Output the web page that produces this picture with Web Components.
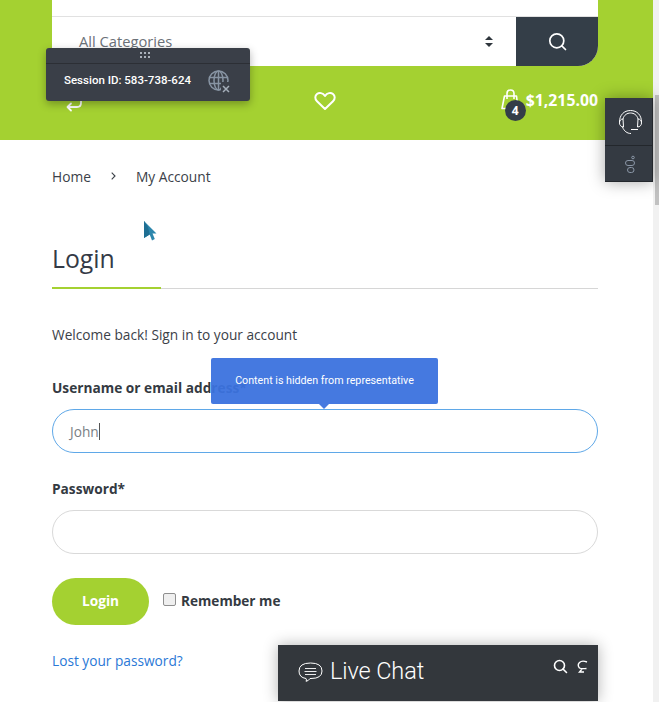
<!DOCTYPE html>
<html lang="en"><head><meta charset="utf-8"><title>My Account</title>
<style>
html,body{margin:0;height:702px;overflow:hidden;background:#fff}
body{font-family:"Open Sans",sans-serif;color:#333a42}
x-page{height:702px}
</style></head><body>
<x-page>
  <x-header></x-header>
  <x-breadcrumb></x-breadcrumb>
  <x-login></x-login>
  <x-session slot="overlay"></x-session>
  <x-side slot="overlay"></x-side>
  <x-hidden-tip slot="overlay"></x-hidden-tip>
  <x-pointer slot="overlay"></x-pointer>
  <x-chat slot="overlay"></x-chat>
</x-page>
<script>
function def(name,html){
  customElements.define(name,class extends HTMLElement{
    constructor(){super();this.attachShadow({mode:'open'}).innerHTML=html;}
  });
}
def('x-page',`<style>
:host{display:flex;position:relative;width:659px;overflow:hidden}
.main{width:653px;flex:none}
.bar{flex:1;background:#f1f1f1;display:flex;flex-direction:column;align-items:flex-end}
.thumb{width:4px;height:110px;margin-top:95px;background:#c1c1c1}
</style><div class="main"><slot></slot></div><div class="bar"><div class="thumb"></div></div><slot name="overlay"></slot>`);

def('x-header',`<style>
:host{display:block;height:140px;background:#a4d131;padding:0 55px 0 52px;box-sizing:border-box}
.search{background:#fff;border-radius:0 0 20px 0;height:66px;display:flex;flex-direction:column}
.top{height:16px;border-bottom:1px solid #e1e1e1}
.row{flex:1;display:flex;align-items:stretch}
.cat{flex:1;display:flex;align-items:center;justify-content:space-between;padding:0 23px 1px 27px;font-size:14.700px;color:#6b7178}
.go{width:82px;flex:none;background:#343e48;border-radius:0 0 20px 0;display:flex;align-items:center;justify-content:center}
.icons{display:flex;align-items:center;height:74px;position:relative;justify-content:center}
.heart{margin-bottom:5px}
.swap{position:absolute;left:13px;top:22px}
.cart{position:absolute;right:0;top:22px;display:flex;align-items:center;color:#fff;font-weight:700;font-size:15.800px}
.bag{position:relative;width:25px;height:24px;margin-right:1px}
.n{position:absolute;left:5px;top:12px;width:21px;height:21px;border-radius:50%;background:#343e48;color:#fff;font-size:12px;line-height:21px;text-align:center}
.price{line-height:24px}
</style>
<div class="search"><div class="top"></div>
<div class="row"><div class="cat"><span>All Categories</span>
<svg width="8" height="11" viewBox="0 0 8 11" fill="#2f363d"><path d="M4 0 8 4H0zM0 7h8l-4 4z"/></svg></div>
<div class="go"><svg width="19" height="19" viewBox="0 0 19 19" fill="none" stroke="#fff" stroke-width="1.700"><circle cx="8.800" cy="8.800" r="7"/><path d="M13.800 13.800 17.500 17.500" stroke-linecap="round"/></svg></div></div></div>
<div class="icons">
<svg class="swap" width="19" height="24" viewBox="0 0 19 24" fill="none" stroke="#fff" stroke-width="1.800" stroke-linecap="round" stroke-linejoin="round"><path d="M16 11v4q0 4-4 4H3M6 15.500 2.500 19 6 22.500"/></svg>
<svg class="heart" width="22" height="20" viewBox="0 0 22 20" fill="none" stroke="#fff" stroke-width="2" stroke-linejoin="round"><path d="M11 18 3 10.300C.5 7.800 1 4.600 3 3c2.200-1.700 5.800-1.300 8 2 2.200-3.300 5.800-3.700 8-2 2 1.600 2.500 4.800 0 7.300z"/></svg>
<div class="cart"><div class="bag"><svg width="22" height="24" viewBox="0 0 22 24" fill="none" stroke="#fff" stroke-width="1.600" stroke-linejoin="round" style="position:absolute;left:0;top:0"><path d="M4.500 8 2 20.500h16L16.500 8z"/><path d="M7 11V5.500Q7 2 10.500 2T14 5.500V11"/></svg><div class="n">4</div></div><span class="price">$1,215.00</span></div>
</div>`);

def('x-breadcrumb',`<style>
:host{display:flex;align-items:center;height:20px;margin:26px 0 0 52px;font-size:13.750px;color:#3b4148}
svg{margin:0 20px 0 20px}
</style><span>Home</span><svg width="5" height="8" viewBox="0 0 5 8" fill="none" stroke="#3b4148" stroke-width="1.100"><path d="M.7.700 4 4 .7 7.300"/></svg><span>My Account</span>`);

def('x-login',`<style>
:host{display:block;padding:0 55px 0 52px}
h1{margin:48px 0 0;height:55px;box-sizing:border-box;font-size:24.800px;font-weight:400;line-height:33px;padding-top:8px;color:#343a46;position:relative;border-bottom:1px solid #d6d6d6}
h1::after{content:"";position:absolute;left:0;bottom:-1px;width:109px;height:2px;background:#a4d131}
p{margin:36px 0 0;font-size:13.700px;line-height:20px;color:#3b4148}
label{display:block;font-weight:700;font-size:13.700px;line-height:20px;color:#343a42}
.u{margin-top:33px}
.field{height:44px;box-sizing:border-box;border:1px solid #d9d9d9;border-radius:22px;margin-top:11px;padding-left:17px;display:flex;align-items:center;font-size:13.700px;color:#7a7f85}
.focus{border-color:#5fa8e8}
.caret{display:inline-block;width:1px;height:17px;background:#555}
.p{margin-top:26px}
.actions{display:flex;align-items:center;margin-top:24px}
button{width:97px;height:47px;border:0;border-radius:24px;background:#a4d131;color:#fff;font:700 13.700px "Open Sans",sans-serif;padding:0 0 2px}
.box{width:11px;height:11px;margin:0 5px 0 14px;border:1px solid #8f8f8f;border-radius:2px;background:#efefef;position:relative;top:-2px}
.rm{font-weight:700;font-size:13.600px;color:#343a42;position:relative;top:-1px}
a{display:block;margin-top:26px;font-size:13.700px;line-height:20px;color:#2a78d6;text-decoration:none}
</style>
<h1>Login</h1>
<p>Welcome back! Sign in to your account</p>
<label class="u">Username or email address*</label>
<div class="field focus">John<span class="caret"></span></div>
<label class="p">Password*</label>
<div class="field" style="margin-top:11px"></div>
<div class="actions"><button>Login</button><span class="box"></span><span class="rm">Remember me</span></div>
<a href="#">Lost your password?</a>`);

def('x-session',`<style>
:host{position:absolute;left:46px;top:48px;width:204px;height:53px;background:#3a3f48;border-radius:3px;box-shadow:0 3px 9px rgba(0,0,0,.3);color:#fff;font:500 11.500px Roboto,sans-serif;display:flex;flex-direction:column}
.grip{height:14.500px;border-bottom:1px solid #2c2f35;display:flex;align-items:center;justify-content:center;padding-right:6px}
.body{flex:1;display:flex;align-items:center;justify-content:space-between;padding:0 19px 5px 18px}
</style>
<div class="grip"><svg width="11" height="7" viewBox="0 0 11 7" fill="#aab1bb"><path d="M0 0h2v2H0zM4 0h2v2H4zM8 0h2v2H8zM0 4h2v2H0zM4 4h2v2H4zM8 4h2v2H8z"/></svg></div>
<div class="body"><span>Session ID: 583-738-624</span>
<svg width="23" height="23" viewBox="0 0 23 23" fill="none" stroke="#8794a3" stroke-width="1.500" style="margin-top:3px"><circle cx="10.500" cy="10.500" r="9.500"/><ellipse cx="10.500" cy="10.500" rx="4.500" ry="9.500"/><path d="M1 7.500h19M1 13.500h19M10.500 1v19"/><path d="M13 12h10v11H13z" fill="#3a3f48" stroke="none"/><path d="M15 16l6 6M21 16l-6 6" stroke="#a4aeb9"/></svg></div>`);

def('x-side',`<style>
:host{position:absolute;left:605px;top:98px;width:48px;height:84px;background:#343a42;box-shadow:0 0 16px rgba(0,0,0,.35);border-right:1px solid #23272c;border-bottom:1px solid #23272c;box-sizing:border-box;display:flex;flex-direction:column}
.a{height:48px;border-bottom:1px solid #23272c;box-sizing:border-box;display:flex;align-items:center;justify-content:center}
.a svg{margin-left:3px}
.b{flex:1;display:flex;align-items:center;justify-content:center}
</style>
<div class="a"><svg width="25" height="26" viewBox="0 0 25 26" fill="none" stroke="#fff" stroke-width="1"><path d="M1.500 13C1.500 6 6 1.500 12.500 1.500S23.500 6 23.500 13M5 10C6 6 9 4 12.500 4S19 6 20 10M5 10C2.500 10 1.500 12 1.500 14S3 18 5.500 18L5 10M20 10C22.500 10 23.500 12 23.500 14S22 18 19.500 18L20 10M4.500 18C6 22 9 24.500 13 24.500M13 20.500H20"/></svg></div>
<div class="b"><svg width="12" height="18" viewBox="0 0 12 18" fill="none" stroke="#8a96a6" stroke-width="1"><circle cx="10" cy="2.500" r="1.300"/><rect x="2.500" y="5.500" width="9" height="5" rx="2.500"/><rect x="4.500" y="12.500" width="6.500" height="5" rx="2.500"/></svg></div>`);

def('x-hidden-tip',`<style>
:host{position:absolute;left:211px;top:358px;width:227px;height:46px;background:rgba(59,114,222,.95);border-radius:2px;color:#fff;font:400 10.700px/46px Roboto,sans-serif;text-align:center}
i{position:absolute;left:108px;top:46px;border:5px solid transparent;border-top-color:#4579e0;border-bottom:0}
</style><span>Content is hidden from representative</span><i></i>`);

def('x-pointer',`<style>
:host{position:absolute;left:144px;top:221px;width:13px;height:20px;line-height:0}
</style><svg width="13" height="20" viewBox="0 0 13 20"><path d="M0 0 12.500 12.500H8.500L10.800 18 8 19.500 5.700 13.500 0 17z" fill="#2c86ac"/><path d="M0 0V17L5.700 13.500 4 6z" fill="#1f6f93"/></svg>`);

def('x-chat',`<style>
:host{position:absolute;left:278px;top:645px;width:320px;height:56px;background:#33373c;box-shadow:0 0 14px rgba(0,0,0,.3);color:#fff;display:flex;align-items:flex-start;box-sizing:border-box;padding-left:20px;font:300 23.500px Roboto,sans-serif}
.t{margin-left:7px;line-height:32px;margin-top:10px;letter-spacing:-.1px}
.i{position:absolute;left:0;top:0}
svg.c{margin-top:16px}
</style>
<svg class="c" width="25" height="22" viewBox="0 0 25 22" fill="none" stroke="#fff" stroke-width="1"><path d="M8 17.500Q1 16.500 1 10 1 2 12.500 2T24 10q0 7.500-11 7.500H12q-1.500 2.500-4 2.800 1-1.300 0-2.800z"/><path d="M7 7.500h11M6.500 10.500h12M7 13.500h11" stroke-width=".9"/></svg>
<span class="t">Live Chat</span>
<svg class="i" style="left:275px;top:14px" width="15" height="15" viewBox="0 0 15 15" fill="none" stroke="#fff" stroke-width="1.600"><circle cx="6.500" cy="6.500" r="5"/><path d="M10 10l3.500 3.500" stroke-linecap="round"/></svg>
<svg class="i" style="left:298.500px;top:15px" width="11" height="13" viewBox="0 0 11 13" fill="none" stroke="#fff" stroke-width="1.400"><path d="M10 2Q5 0 2.500 2.500T2.500 8Q4 9 9.500 8.500M5 9 2.500 12H7"/></svg>`);
</script>
</body></html>
